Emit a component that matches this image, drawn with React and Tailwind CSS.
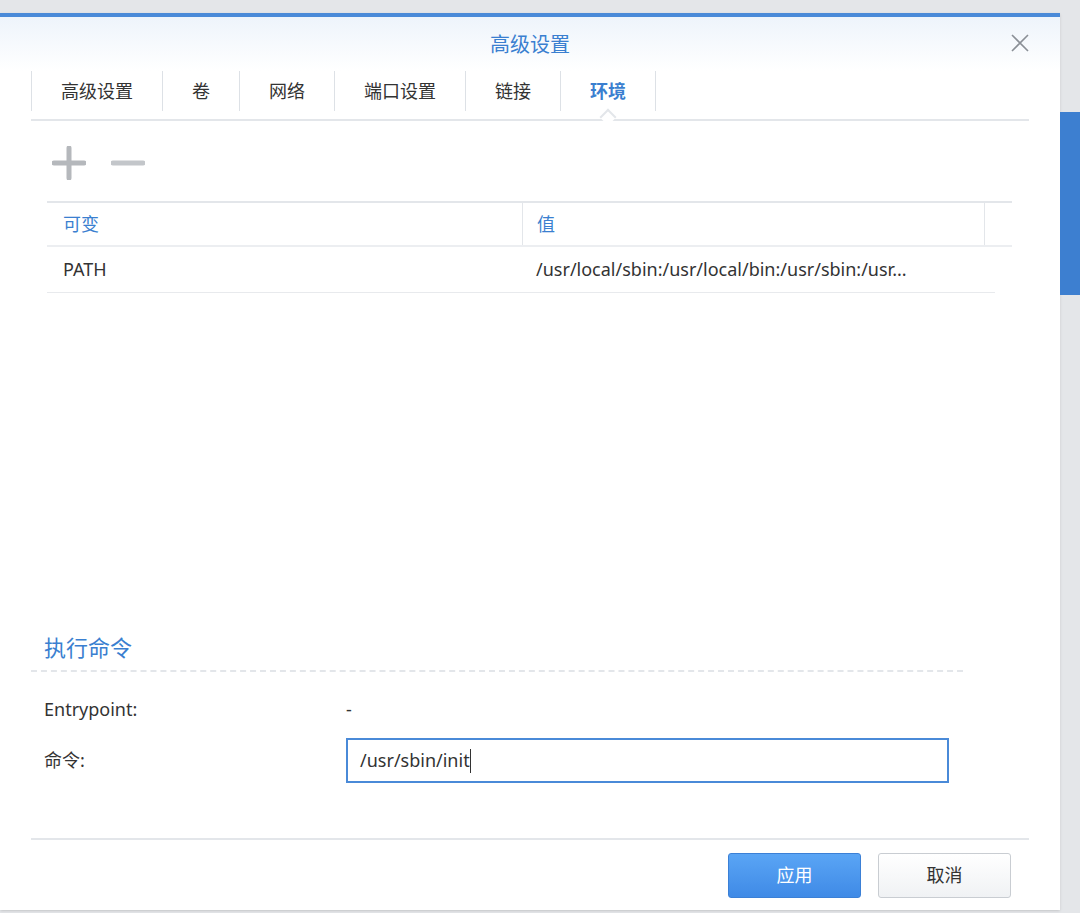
const font = { fontFamily: '"Noto Sans", "Noto Sans CJK SC", sans-serif' };

const tabs = ['高级设置', '卷', '网络', '端口设置', '链接', '环境'];

export default function App() {
  return (
    <div className="w-[1080px] h-[913px] bg-[#e4e6e9] flex overflow-hidden" style={font}>
      <div className="w-[1060px] mt-[13px] h-[897px] bg-white border-t-[4px] border-[#4a8ad8] shadow flex flex-col shrink-0">
        {/* Title bar */}
        <div className="h-[54px] bg-gradient-to-b from-[#eef4fb] to-white relative flex items-center justify-center">
          <span className="text-[20px] text-[#3a7fd0] mt-[2px]">高级设置</span>
          <svg className="absolute right-[30px] top-[16px]" width="20" height="20" viewBox="0 0 20 20">
            <path d="M2 2L18 18M18 2L2 18" stroke="#8a8f96" strokeWidth="1.6" />
          </svg>
        </div>

        {/* Tabs */}
        <div className="mx-[31px] h-[50px] flex border-b-2 border-[#e3e6ea] relative">
          {tabs.map((t, i) => (
            <div
              key={t}
              className={`h-[40px] px-[29px] flex items-center text-[18px] border-l border-[#dde1e6] ${
                i === tabs.length - 1 ? 'border-r text-[#3a7fd0] font-semibold relative' : 'text-[#333]'
              }`}
            >
              {t}
              {i === tabs.length - 1 && (
                <span className="absolute left-1/2 -translate-x-1/2 bottom-[-12px] w-[12px] h-[12px] bg-white border-l-2 border-t-2 border-[#e3e6ea] rotate-45" />
              )}
            </div>
          ))}
        </div>

        {/* Add/remove */}
        <div className="ml-[52px] mt-[25px] h-[34px] flex items-center gap-[25px]">
          <svg width="34" height="34" viewBox="0 0 34 34">
            <path d="M17 2V32M2 17H32" stroke="#b5b8bc" strokeWidth="5" strokeLinecap="round" />
          </svg>
          <svg width="34" height="34" viewBox="0 0 34 34">
            <path d="M2 17H32" stroke="#c3c6ca" strokeWidth="5" strokeLinecap="round" />
          </svg>
        </div>

        {/* Table */}
        <div className="ml-[47px] mt-[21px] w-[965px] border-t-2 border-[#e3e6ea]">
          <div className="h-[44px] flex border-b-2 border-[#eceef1] text-[18px] text-[#3a7fd0]">
            <div className="w-[475px] px-[16px] flex items-center">可变</div>
            <div className="w-[463px] px-[14px] flex items-center border-l border-[#e3e6ea] border-r">值</div>
          </div>
          <div className="h-[46px] w-[948px] flex border-b border-[#e8eaed] text-[18px] text-[#333]">
            <div className="w-[475px] px-[16px] flex items-center">PATH</div>
            <div className="flex-1 px-[14px] flex items-center truncate">/usr/local/sbin:/usr/local/bin:/usr/sbin:/usr...</div>
          </div>
        </div>

        {/* Command section */}
        <div className="mt-[338px] mx-[31px] w-[932px]">
          <div className="px-[13px] pb-[6px] text-[22px] text-[#3a7fd0]">执行命令</div>
          <div className="border-t-2 border-dashed border-[#e3e6ea]" />
          <div className="px-[13px] mt-[22px] flex items-center h-[30px] text-[18px] text-[#333]">
            <span className="w-[302px]">Entrypoint:</span>
            <span>-</span>
          </div>
          <div className="px-[13px] mt-[14px] flex items-center text-[18px] text-[#333]">
            <span className="w-[302px]">命令:</span>
            <div className="w-[603px] h-[45px] border-2 border-[#4a8ad8] flex items-center px-[12px]">
              /usr/sbin/init<span className="w-px h-[24px] bg-[#333]" />
            </div>
          </div>
        </div>

        {/* Footer */}
        <div className="mt-auto mx-[31px] border-t-2 border-[#e3e6ea] h-[72px] flex items-center justify-end gap-[17px] pr-[18px]">
          <button className="w-[133px] h-[45px] rounded-[3px] bg-gradient-to-b from-[#5aa5f5] to-[#3f8ae6] border border-[#3b80d6] text-white text-[18px]">应用</button>
          <button className="w-[133px] h-[45px] rounded-[3px] bg-gradient-to-b from-white to-[#f0f2f4] border border-[#c9cdd2] text-[#333] text-[18px]">取消</button>
        </div>
      </div>
      <div className="flex-1 flex flex-col">
        <div className="h-[112px]" />
        <div className="h-[183px] bg-[#3d7fd0]" />
      </div>
    </div>
  );
}
